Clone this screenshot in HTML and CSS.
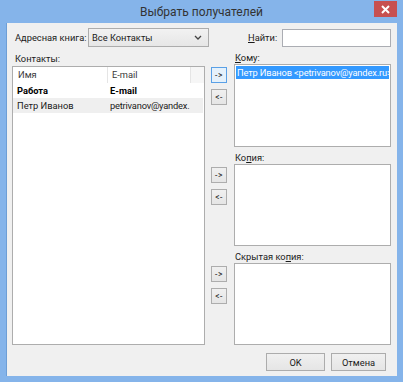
FILE: index.html
```html
<!DOCTYPE html>
<html lang="ru">
<head>
<meta charset="utf-8">
<title>Выбрать получателей</title>
<link rel="stylesheet" href="styles.css">
</head>
<body>
<div class="window">
  <div class="titlebar">
    <span class="title">Выбрать получателей</span>
    <span class="close"><svg width="9" height="9" viewBox="0 0 9 9"><path d="M1 1L8 8M8 1L1 8" stroke="#fff" stroke-width="2"/></svg></span>
  </div>
  <div class="client">
    <div class="toprow">
      <span class="lbl book">Адресная книга:</span>
      <div class="select"><span>Все Контакты</span><svg width="8" height="5" viewBox="0 0 8 5"><path d="M1 1L4 4L7 1" fill="none" stroke="#444" stroke-width="1.3"/></svg></div>
      <span class="lbl find"><u>Н</u>айти:</span>
      <div class="input"></div>
    </div>
    <div class="main">
      <div class="left">
        <div class="label contacts">Контакты:</div>
        <div class="list">
          <div class="thead">
            <div class="c1">Имя</div>
            <div class="c2">E-mail</div>
            <div class="c3"></div>
          </div>
          <div class="row bold"><div class="c1">Работа</div><div class="c2">E-mail</div></div>
          <div class="row alt"><div class="c1">Петр Иванов</div><div class="c2 mail">petrivanov@yandex.</div></div>
        </div>
      </div>
      <div class="right">
        <div class="section">
          <div class="btns"><div class="arrow focus">-&gt;</div><div class="arrow">&lt;-</div></div>
          <div class="field">
            <div class="label"><u>К</u>ому:</div>
            <div class="box b1"><div class="sel">Петр Иванов &lt;petrivanov@yandex.ru&gt;</div></div>
          </div>
        </div>
        <div class="section">
          <div class="btns"><div class="arrow">-&gt;</div><div class="arrow">&lt;-</div></div>
          <div class="field">
            <div class="label">Ко<u>п</u>ия:</div>
            <div class="box"></div>
          </div>
        </div>
        <div class="section">
          <div class="btns"><div class="arrow">-&gt;</div><div class="arrow">&lt;-</div></div>
          <div class="field">
            <div class="label">Скрытая ко<u>п</u>ия:</div>
            <div class="box"></div>
          </div>
        </div>
      </div>
    </div>
    <div class="bottom">
      <div class="btn ok">OK</div>
      <div class="btn cancel">Отмена</div>
    </div>
  </div>
</div>
</body>
</html>
```

FILE: styles.css
```css
* { box-sizing: border-box; }
html, body { margin: 0; padding: 0; }
body {
  width: 403px;
  height: 382px;
  overflow: hidden;
  font-family: Roboto, "Noto Sans", sans-serif;
  font-size: 9.3px;
  color: #1a1a1a;
}
.window {
  width: 403px;
  height: 382px;
  background: #85b4ea;
  display: flex;
  flex-direction: column;
  padding: 0 6px 6px 6px;
}
.titlebar {
  height: 23px;
  position: relative;
  display: flex;
  align-items: center;
  justify-content: center;
}
.title {
  font-size: 12px;
  color: #333;
}
.close {
  position: absolute;
  right: 0;
  top: 1px;
  width: 23px;
  height: 16px;
  background: #c75050;
  display: flex;
  align-items: center;
  justify-content: center;
}
.client {
  flex: 1;
  min-height: 0;
  background: #f0f0f0;
  border-left: 1px solid #6d9ed6;
  display: flex;
  flex-direction: column;
  padding: 5px 6px 0 5px;
}
.toprow {
  height: 19px;
  display: flex;
  align-items: center;
}
.lbl { white-space: nowrap; }
.book { width: 76px; padding-left: 3px; }
.select {
  width: 121px;
  height: 19px;
  border: 1px solid #acacac;
  background: linear-gradient(#f2f2f2, #e6e6e6);
  display: flex;
  align-items: center;
  justify-content: space-between;
  padding: 0 6px 0 3px;
}
.find { margin-left: 39px; width: 34px; }
.input {
  flex: 1;
  height: 18px;
  border: 1px solid #abadb3;
  background: #fff;
}
.main {
  height: 298px;
  display: flex;
  gap: 6px;
}
.left {
  width: 193px;
  flex: none;
  display: flex;
  flex-direction: column;
}
.label {
  height: 17px;
  padding: 4px 0 0 1px;
  line-height: 13px;
  white-space: nowrap;
}
.contacts { height: 19px; padding-left: 3px; padding-top: 5px; }
.list {
  flex: 1;
  background: #fff;
  border: 1px solid #adadad;
}
.thead {
  height: 16px;
  display: flex;
}
.thead > div, .row > div {
  padding-left: 5px;
  line-height: 15px;
  white-space: nowrap;
  overflow: hidden;
}
.thead .c1, .thead .c2 { color: #3a3a3a; }
.thead .c2 { border-left: 1px solid #e5e5e5; padding-left: 4px; }
.c1 { width: 94px; flex: none; }
.c2 { width: 83px; flex: none; }
.row .c2.mail { width: 90px; letter-spacing: -0.2px; }
.thead .c3 {
  flex: 1;
  border-left: 1px solid #e5e5e5;
  background: #f6f6f6;
}
.row {
  height: 15px;
  display: flex;
  margin-right: 1px;
}
.row .c1 { padding-left: 4px; }
.row .c2 { padding-left: 3px; }
.bold { font-weight: bold; color: #000; }
.alt { background: #efefef; }
.right {
  flex: 1;
  min-width: 0;
  display: flex;
  flex-direction: column;
}
.section {
  display: flex;
  gap: 7px;
}
.btns {
  width: 16px;
  flex: none;
  padding-top: 20px;
  display: flex;
  flex-direction: column;
  gap: 6px;
}
.arrow {
  width: 16px;
  height: 16px;
  border: 1px solid #adadad;
  background: linear-gradient(#f0f0f0, #e5e5e5);
  font-size: 8.5px;
  line-height: 14px;
  letter-spacing: 0.5px;
  text-align: center;
  color: #222;
}
.arrow.focus {
  border-color: #5aa0e6;
  background: #e5f1fb;
}
.field {
  flex: 1;
  min-width: 0;
  display: flex;
  flex-direction: column;
}
.box {
  height: 82px;
  background: #fff;
  border: 1px solid #adadad;
  padding: 1px;
}
.box.b1 { height: 83px; }
.sel {
  background: #3399ff;
  color: #fff;
  line-height: 13px;
  padding-left: 1px;
  letter-spacing: -0.15px;
  white-space: nowrap;
  overflow: hidden;
}
.bottom {
  display: flex;
  justify-content: flex-end;
  gap: 6px;
  padding: 8px 5px 0 0;
}
.btn {
  height: 18px;
  border: 1px solid #acacac;
  background: linear-gradient(#f0f0f0, #e5e5e5);
  display: flex;
  align-items: center;
  justify-content: center;
  color: #1a1a1a;
}
.ok { width: 59px; }
.cancel { width: 55px; }
```
